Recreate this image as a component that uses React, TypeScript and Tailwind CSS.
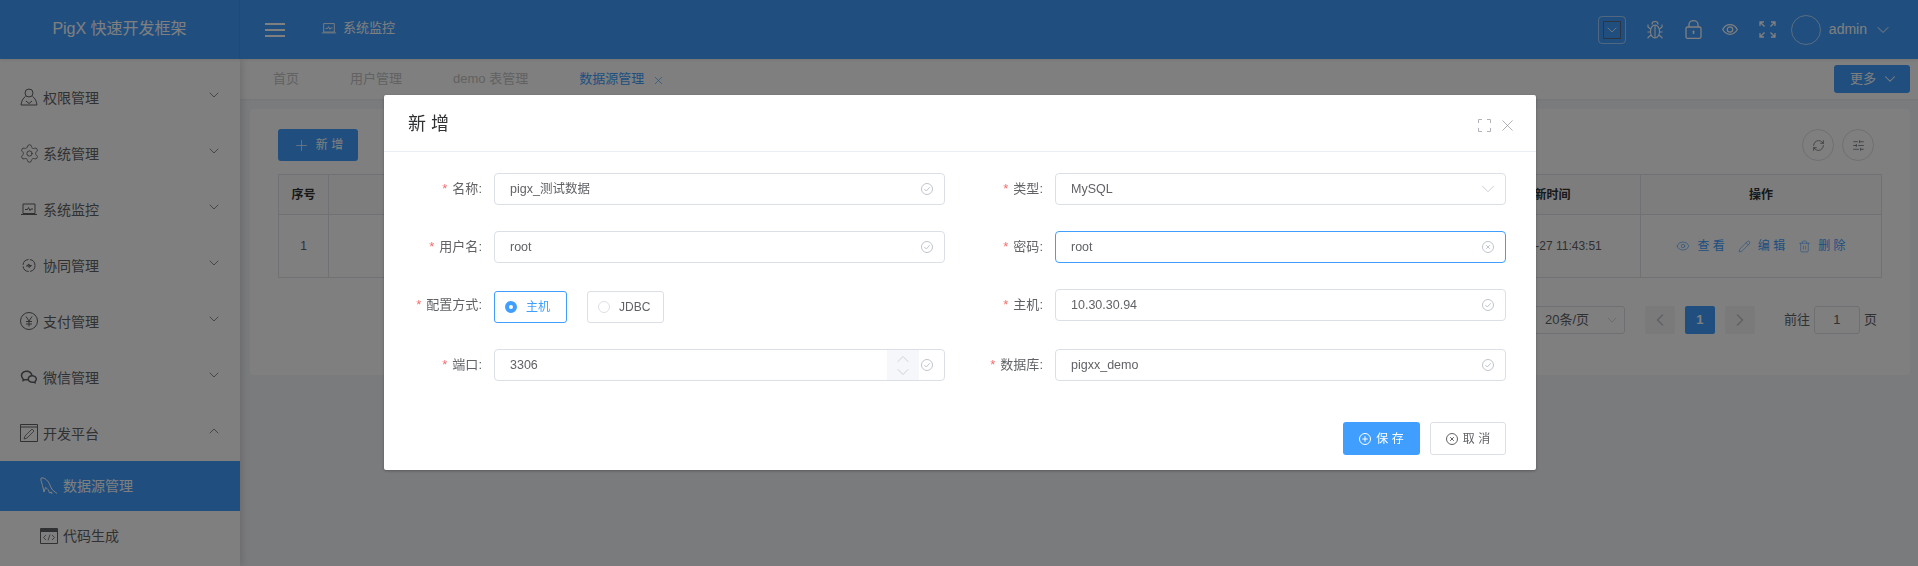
import { ChevronDown, ChevronUp, ChevronLeft, ChevronRight, Settings, X, Plus, Eye, RefreshCw, SlidersHorizontal, Trash2, Pencil } from "lucide-react"
import { RiWechatLine } from "react-icons/ri"
import type { ReactNode } from "react"

const Laptop = ({ size = 18 }: { size?: number }) => (
  <svg width={size} height={size} viewBox="0 0 18 18" fill="none" stroke="currentColor" strokeWidth="1">
    <path d="M3 4h12v9.500H3zM1 14.500h16M5 9.500h2.500l1-2 1.500 3 1-1.500h2" />
  </svg>
)

const UserIcon = () => (
  <svg width="18" height="18" viewBox="0 0 18 18" fill="none" stroke="currentColor" strokeWidth="1">
    <circle cx="9" cy="5" r="4" />
    <path d="M5.500 8.500C3 10 1.500 13 1 17h16c-.5-4-2-7-4.500-8.500M6 13l3 2.500 3-2.500" />
  </svg>
)

const FlowIcon = () => (
  <svg width="18" height="18" viewBox="0 0 18 18" fill="none" stroke="currentColor" strokeWidth="1">
    <circle cx="9" cy="9.500" r="6" strokeDasharray="8 1.500" />
    <path d="M6.500 10l2.500-2v1.500h2.500L9 11.500V10z" />
  </svg>
)

const YenIcon = () => (
  <svg width="18" height="18" viewBox="0 0 18 18" fill="none" stroke="currentColor" strokeWidth="1">
    <circle cx="9" cy="9" r="8.500" />
    <path d="M6 4.500l3 4.500 3-4.500M6 9.500h6M6 12h6M9 9v5.500" />
  </svg>
)

const DevIcon = () => (
  <svg width="18" height="18" viewBox="0 0 18 18" fill="none" stroke="currentColor" strokeWidth="1">
    <path d="M.5.500h17v17H.5zM.5 3h17" />
    <path d="M4 15l1-3 7-7 2 2-7 7z" strokeWidth="0.800" />
  </svg>
)

const CodeIcon = () => (
  <svg width="18" height="16" viewBox="0 0 18 16" fill="none" stroke="currentColor" strokeWidth="1">
    <path d="M.5.500h17v15H.5z" />
    <path d="M.5 2.500h17" strokeWidth="3" />
    <path d="M6 7L3.500 9.500 6 12M12 7l2.500 2.500L12 12M10 6.500l-2 6" strokeWidth="0.800" />
  </svg>
)

const Dolphin = () => (
  <svg width="18" height="18" viewBox="0 0 18 18" fill="none" stroke="currentColor" strokeWidth="1">
    <path d="M1 1c3-.5 5 1 7 3.500 2 2.500 2.500 6 4.500 8.500l4.500 3.500" />
    <path d="M1 1c-.5 3 1 5 1.500 7.500L4 15l1.500-4.500c2 1 3.500 3 4 5.500l2-1 .5 2" />
  </svg>
)

const Hamburger = () => (
  <svg width="20" height="14" viewBox="0 0 20 14" fill="currentColor">
    <path d="M0 0h20v2H0zM0 6h20v2H0zM0 12h20v2H0z" />
  </svg>
)

const BugIcon = () => (
  <svg width="16" height="18" viewBox="0 0 16 18" fill="none" stroke="currentColor" strokeWidth="1.100">
    <ellipse cx="8" cy="10.500" rx="4.500" ry="6.500" />
    <path d="M8 4v13M5 3.500C5 1.500 6.500.5 8 .5s3 1 3 3M3.500 8L1 6V3.500M12.500 8L15 6V3.500M3.500 11H.5M12.500 11h3M4 14l-3 2.500v1M12 14l3 2.500v1" />
  </svg>
)

const LockIcon = () => (
  <svg width="17" height="19" viewBox="0 0 17 19" fill="none" stroke="currentColor" strokeWidth="1.300">
    <rect x="1" y="7" width="15" height="11.300" rx="1.500" />
    <path d="M4 7V4.500C4 2.300 6 .7 8.500.7S13 2.300 13 4.500V7" />
    <path d="M8.500 11.500v2.500" strokeWidth="1.500" />
    <circle cx="8.500" cy="11.500" r="1" fill="currentColor" stroke="none" />
  </svg>
)

const EyeIcon = () => (
  <svg width="16" height="11" viewBox="0 0 16 11" fill="none" stroke="currentColor" strokeWidth="1.200">
    <path d="M.7 5.500C2.500 2.300 5 .7 8 .7s5.500 1.600 7.300 4.800C13.500 8.700 11 10.300 8 10.300S2.500 8.700.7 5.500z" />
    <circle cx="8" cy="5.500" r="2.700" />
  </svg>
)

const Fullscreen = ({ size = 17 }: { size?: number }) => (
  <svg width={size} height={size} viewBox="0 0 17 17" fill="none" stroke="currentColor" strokeWidth="1.300">
    <path d="M1 5V1h4M12 1h4v4M16 12v4h-4M5 16H1v-4M1.500 1.500l4 4M15.500 1.500l-4 4M15.500 15.500l-4-4M1.500 15.500l4-4" />
  </svg>
)

const DialogExpand = () => (
  <svg width="13" height="13" viewBox="0 0 13 13" fill="none" stroke="#b0b3b9" strokeWidth="1">
    <path d="M.5 4V.5H4M9 .5h3.500V4M12.500 9v3.500H9M4 12.500H.5V9" />
  </svg>
)

const CheckCircle = () => (
  <svg width="12" height="12" viewBox="0 0 12 12" fill="none" stroke="#c0c4cc" strokeWidth="1">
    <circle cx="6" cy="6" r="5.500" />
    <path d="M3.300 6l2 2 3.400-3.700" />
  </svg>
)

const CloseCircle = ({ color = "#c0c4cc" }: { color?: string }) => (
  <svg width="12" height="12" viewBox="0 0 12 12" fill="none" stroke={color} strokeWidth="1">
    <circle cx="6" cy="6" r="5.500" />
    <path d="M4.200 4.200l3.600 3.600M7.800 4.200L4.200 7.800" />
  </svg>
)

const PlusCircle = () => (
  <svg width="12" height="12" viewBox="0 0 12 12" fill="none" stroke="#fff" strokeWidth="1">
    <circle cx="6" cy="6" r="5.500" />
    <path d="M6 3.300v5.400M3.300 6h5.400" />
  </svg>
)

const menus = [
  { name: "权限管理", icon: <UserIcon /> },
  { name: "系统管理", icon: <Settings size={21} strokeWidth={1} className="shrink-0" /> },
  { name: "系统监控", icon: <Laptop /> },
  { name: "协同管理", icon: <FlowIcon /> },
  { name: "支付管理", icon: <YenIcon /> },
  { name: "微信管理", icon: <RiWechatLine size={18} /> },
]

const Sidebar = () => (
  <div className="w-[240px] shrink-0 pt-[10px] bg-white text-[#606266] text-[14px] shadow-[2px_0_8px_rgba(0,0,0,0.15)] z-10">
    {menus.map((m) => (
      <div key={m.name} className="h-[56px] flex items-center pl-[20px] pr-[18px]">
        <span className="w-[18px] flex justify-center">{m.icon}</span>
        <span className="ml-[5px] pt-[2px]">{m.name}</span>
        <ChevronDown size={16} strokeWidth={1.1} className="ml-auto mb-[4px]" />
      </div>
    ))}
    <div className="h-[56px] flex items-center pl-[20px] pr-[18px]">
      <span className="w-[18px] flex justify-center"><DevIcon /></span>
      <span className="ml-[5px] pt-[2px]">开发平台</span>
      <ChevronUp size={16} strokeWidth={1.1} className="ml-auto mb-[4px]" />
    </div>
    <div className="h-[50px] flex items-center pl-[40px] bg-[#409eff] text-white">
      <Dolphin />
      <span className="ml-[5px]">数据源管理</span>
    </div>
    <div className="h-[50px] flex items-center pl-[40px]">
      <CodeIcon />
      <span className="ml-[5px]">代码生成</span>
    </div>
  </div>
)

const Header = () => (
  <div className="h-[59px] shrink-0 flex items-center bg-[#409eff] text-white z-20 shadow-[0_1px_3px_rgba(0,0,0,0.1)]">
    <div className="w-[240px] h-full flex items-center justify-center pb-[2px] text-[16px] border-r border-[#3b94ee]">PigX 快速开发框架</div>
    <div className="ml-[25px]"><Hamburger /></div>
    <div className="ml-[36px] flex items-center text-[13px] mb-[3px]">
      <Laptop size={16} />
      <span className="ml-[6px]">系统监控</span>
    </div>
    <div className="ml-auto flex items-center pr-[25px]">
      <div className="w-[28px] h-[28px] border border-white/50 rounded-[4px] flex items-center justify-center">
        <div className="w-[18px] h-[18px] border border-[#5a6c80] flex items-center justify-center">
          <ChevronDown size={16} strokeWidth={1.2} />
        </div>
      </div>
      <span className="ml-[21px]"><BugIcon /></span>
      <span className="ml-[22px]"><LockIcon /></span>
      <span className="ml-[20px]"><EyeIcon /></span>
      <span className="ml-[21px]"><Fullscreen /></span>
      <div className="ml-[15px] w-[30px] h-[30px] rounded-full border border-white/60" />
      <span className="ml-[8px] text-[14px]">admin</span>
      <ChevronDown size={20} strokeWidth={1.2} className="ml-[6px]" />
    </div>
  </div>
)

const Tabs = () => (
  <div className="h-[40px] shrink-0 flex items-center bg-white pl-[33px] pr-[8px] text-[13px] text-[#c4c4c4] shadow-[0_1px_2px_rgba(0,0,0,0.05)]">
    <div className="flex gap-[51px]">
      <span>首页</span>
      <span>用户管理</span>
      <span>demo 表管理</span>
      <span className="flex items-center text-[#409eff]">
        数据源管理
        <X size={13} strokeWidth={1.2} className="ml-[8px] mt-[2px]" />
      </span>
    </div>
    <button className="ml-auto w-[76px] h-[28px] pl-[16px] rounded-[3px] bg-[#409eff] text-white text-[13px] flex items-center gap-[5px]">
      更多
      <ChevronDown size={18} strokeWidth={1.4} />
    </button>
  </div>
)

const Action = ({ icon, label }: { icon: ReactNode; label: string }) => (
  <span className="flex items-center gap-[7px] text-[#409eff]">
    {icon}
    {label}
  </span>
)

const DataTable = () => (
  <table className="w-[1604px] mt-[13px] table-fixed border-collapse text-[12px] text-[#606266] text-center">
    <colgroup>
      <col className="w-[50px]" />
      <col />
      <col className="w-[188px]" />
      <col className="w-[241px]" />
    </colgroup>
    <thead>
      <tr className="h-[40px] bg-[#fafafa] text-[#303133] font-bold">
        <th className="border border-[#dfe3ea]">序号</th>
        <th className="border border-[#dfe3ea]">名称</th>
        <th className="border border-[#dfe3ea]">更新时间</th>
        <th className="border border-[#dfe3ea]">操作</th>
      </tr>
    </thead>
    <tbody>
      <tr className="h-[63px]">
        <td className="border border-[#dfe3ea]">1</td>
        <td className="border border-[#dfe3ea]">pigx_测试数据</td>
        <td className="border border-[#dfe3ea]">2020-03-27 11:43:51</td>
        <td className="border border-[#dfe3ea]">
          <div className="flex justify-center gap-[13px]">
            <Action icon={<Eye size={14} strokeWidth={1.1} />} label="查 看" />
            <Action icon={<Pencil size={13} strokeWidth={1.1} />} label="编 辑" />
            <Action icon={<Trash2 size={13} strokeWidth={1.1} />} label="删 除" />
          </div>
        </td>
      </tr>
    </tbody>
  </table>
)

const Pagination = () => (
  <div className="mt-[28px] flex items-center justify-end text-[13px] text-[#606266] pr-[5px]">
    <div className="w-[96px] h-[28px] border border-[#dcdfe6] rounded-[3px] flex items-center pl-[15px] pr-[4px]">
      20条/页
      <ChevronDown size={16} strokeWidth={1} className="ml-auto text-[#c0c4cc]" />
    </div>
    <div className="ml-[20px] w-[30px] h-[28px] rounded-[2px] bg-[#f4f4f5] flex items-center justify-center text-[#c0c4cc]">
      <ChevronLeft size={20} strokeWidth={2} />
    </div>
    <div className="ml-[10px] w-[30px] h-[28px] rounded-[2px] bg-[#409eff] text-white font-bold flex items-center justify-center">1</div>
    <div className="ml-[10px] w-[30px] h-[28px] rounded-[2px] bg-[#f4f4f5] flex items-center justify-center text-[#c0c4cc]">
      <ChevronRight size={20} strokeWidth={2} />
    </div>
    <span className="ml-[29px]">前往</span>
    <div className="mx-[4px] w-[46px] h-[28px] border border-[#dcdfe6] rounded-[3px] flex items-center justify-center">1</div>
    <span>页</span>
  </div>
)

const Field = ({ label, children }: { label: string; children: ReactNode }) => (
  <div className="flex items-start">
    <label className="w-[110px] h-[32px] leading-[32px] pr-[12px] text-right text-[13px] text-[#606266] whitespace-nowrap">
      <span className="text-[#f56c6c] mr-[5px]">*</span>
      {label}:
    </label>
    <div className="flex-1 flex gap-[20px]">{children}</div>
  </div>
)

const Input = ({ value, focus, icon }: { value: string; focus?: boolean; icon?: ReactNode }) => (
  <div className={focus ? "flex-1 h-[32px] border border-[#409eff] rounded-[4px] flex items-center pl-[15px] pr-[11px] text-[12.500px] text-[#606266]" : "flex-1 h-[32px] border border-[#dcdfe6] rounded-[4px] flex items-center pl-[15px] pr-[11px] text-[12.500px] text-[#606266]"}>
    {value}
    <span className="ml-auto">{icon ?? <CheckCircle />}</span>
  </div>
)

const Dialog = () => (
  <div className="fixed left-[384px] top-[95px] w-[1152px] h-[375px] bg-white rounded-[2px] shadow-[0_1px_3px_rgba(0,0,0,0.3)]">
    <div className="h-[57px] pl-[24px] pr-[19px] flex items-center border-b border-[#ebeef5]">
      <span className="mt-[2px] text-[18px] text-[#303133]">新 增</span>
      <span className="ml-auto mr-[7px] mt-[5px]"><DialogExpand /></span>
      <X size={19} strokeWidth={0.9} color="#909399" className="mt-[5px]" />
    </div>
    <div className="grid grid-cols-2 gap-y-[26px] pt-[21px] pr-[30px]">
      <Field label="名称"><Input value="pigx_测试数据" /></Field>
      <Field label="类型">
        <Input value="MySQL" icon={<ChevronDown size={22} strokeWidth={0.9} color="#c0c4cc" className="-mr-[5px]" />} />
      </Field>
      <Field label="用户名"><Input value="root" /></Field>
      <Field label="密码"><Input value="root" focus icon={<CloseCircle />} /></Field>
      <Field label="配置方式">
        <div className="mt-[2px] w-[73px] h-[32px] border border-[#409eff] rounded-[3px] flex items-center pl-[10px] text-[12px] text-[#409eff]">
          <span className="w-[12px] h-[12px] rounded-full border-[4px] border-[#409eff] bg-white" />
          <span className="ml-[9px]">主机</span>
        </div>
        <div className="mt-[2px] w-[77px] h-[32px] border border-[#dcdfe6] rounded-[3px] flex items-center pl-[10px] text-[12px] text-[#606266]">
          <span className="w-[12px] h-[12px] rounded-full border border-[#dcdfe6]" />
          <span className="ml-[9px]">JDBC</span>
        </div>
      </Field>
      <Field label="主机"><Input value="10.30.30.94" /></Field>
      <Field label="端口">
        <div className="flex-1 h-[32px] border border-[#dcdfe6] rounded-[4px] flex items-center pl-[15px] pr-[11px] text-[12.500px] text-[#606266]">
          3306
          <div className="ml-auto mr-[2px] w-[32px] h-[30px] bg-[#f5f7fa] flex flex-col items-center justify-center text-[#c0c4cc]">
            <ChevronUp size={20} strokeWidth={0.9} className="-my-[3.500px]" />
            <ChevronDown size={20} strokeWidth={0.9} className="-my-[3.500px]" />
          </div>
          <CheckCircle />
        </div>
      </Field>
      <Field label="数据库"><Input value="pigxx_demo" /></Field>
    </div>
    <div className="mt-[41px] pr-[30px] flex justify-end gap-[10px] text-[12px]">
      <button className="w-[77px] h-[33px] rounded-[3px] bg-[#409eff] text-white flex items-center justify-center gap-[5px]">
        <PlusCircle />
        保 存
      </button>
      <button className="w-[76px] h-[33px] rounded-[3px] border border-[#dcdfe6] text-[#606266] flex items-center justify-center gap-[5px]">
        <CloseCircle color="#606266" />
        取 消
      </button>
    </div>
  </div>
)

const App = () => {
  return (
    <div className="h-[566px] w-[1918px] overflow-hidden flex flex-col bg-[#f5f7fa] font-['Liberation_Sans','Noto_Sans_CJK_SC',sans-serif]">
      <Header />
      <div className="flex flex-1 min-h-0">
        <Sidebar />
        <div className="flex-1 min-w-0 flex flex-col">
          <Tabs />
          <div className="pt-[10px] pl-[10px] pr-[8px]">
            <div className="h-[266px] bg-white rounded-[4px] px-[28px] pt-[20px]">
              <div className="flex items-center">
                <button className="w-[80px] h-[32px] rounded-[3px] bg-[#409eff] text-white text-[12px] flex items-center justify-center gap-[6px]">
                  <Plus size={17} strokeWidth={1} />
                  新 增
                </button>
                <div className="ml-auto mr-[8px] flex gap-[8px] text-[#606266]">
                  <span className="w-[32px] h-[32px] rounded-full border border-[#dcdfe6] flex items-center justify-center">
                    <RefreshCw size={13} strokeWidth={1.3} />
                  </span>
                  <span className="w-[32px] h-[32px] rounded-full border border-[#dcdfe6] flex items-center justify-center">
                    <SlidersHorizontal size={13} strokeWidth={1.3} />
                  </span>
                </div>
              </div>
              <DataTable />
              <Pagination />
            </div>
          </div>
        </div>
      </div>
      <div className="fixed inset-0 z-30 bg-black/50" />
      <div className="relative z-40">
        <Dialog />
      </div>
    </div>
  )
}

export default App
